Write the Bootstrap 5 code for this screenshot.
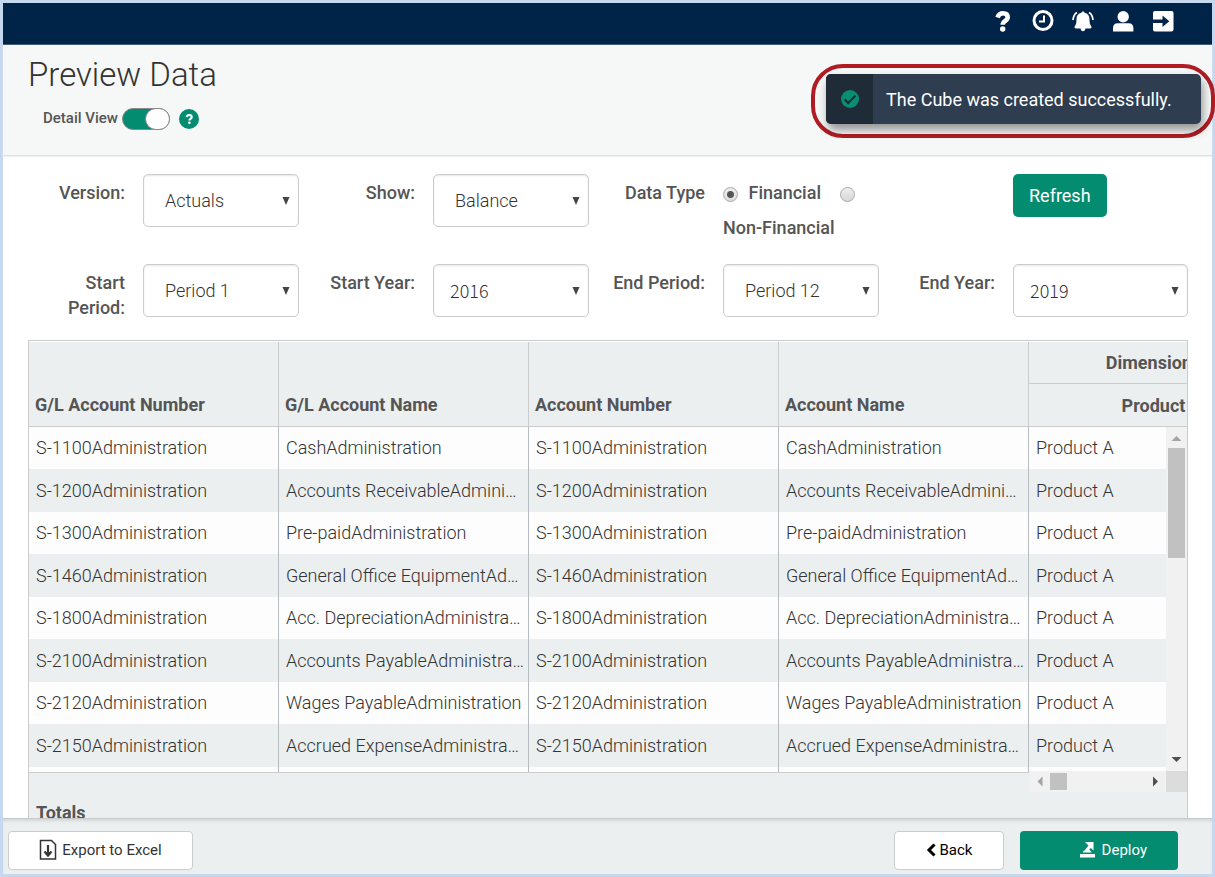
<!DOCTYPE html>
<html lang="en">
<head>
<meta charset="utf-8">
<meta name="viewport" content="width=device-width, initial-scale=1">
<title>Preview Data</title>
<link href="https://cdn.jsdelivr.net/npm/bootstrap@5.3.0/dist/css/bootstrap.min.css" rel="stylesheet">
<style>
  :root { --green: #048c71; --navy: #002448; --ink: #555; --ink-light: #333; --mist: #ebeff0; --rule: #ccc; }
  body { font-family: Roboto, "Liberation Sans", sans-serif; font-size: 18px; line-height: 25px; color: var(--ink); }
  .app-frame { border: 3px solid #c6d8f0; height: 100vh; background: #fff; }
  .topbar { background: var(--navy); height: 42px; padding: 0 35px 5px; gap: 12px; border-bottom: 1px solid #3f5c78; }
  .topbar a { width: 28px; height: 28px; color: #fff; }
  .page-head { background: #f5f8f7; border-bottom: 1px solid #e0e3e3; height: 111px; padding: 8px 25px; box-shadow: 0 1px 1px #f1f1f1; }
  .page-head h1 { font-size: 33px; line-height: 44px; font-weight: 300; color: var(--ink-light); margin: 0; }
  .detail { font-size: 15px; font-weight: 500; padding-left: 15px; margin-top: 9px; gap: 4px; }
  .form-switch .form-check-input.view-toggle { width: 48px; height: 22px; margin: 0; border: 1px solid #888; border-radius: 11px; background: var(--green); position: relative; }
  .view-toggle::before { content: ""; position: absolute; right: -1px; top: -1px; width: 25px; height: 22px; border: 1px solid #888; border-radius: 11px; background: #fff; }
  .help-dot { width: 20px; height: 20px; margin-left: 5px; background: var(--green); }

  .callout-ring { position: absolute; top: 61px; right: -3px; z-index: 5; border: 4px solid #b01c24; border-radius: 32px; padding: 6px 10px 10px 11px; }
  .toast.notice { width: 375px; max-width: 100%; height: 50px; border: 0; border-radius: 5px; background: #2e3d50; color: #fff; overflow: hidden; box-shadow: 2px 6px 10px rgba(0,0,0,.4); }
  .notice-mark { width: 47px; background: #1f2b37; }
  .notice-text { padding-left: 13px; font-size: 18px; font-weight: 400; }

  .work { padding: 18px 24px 0 25px; min-height: 0; overflow: hidden; }
  .filters { row-gap: 37px; }
  .field-name { flex: 0 0 115px; padding: 6px 18px 0 0; text-align: right; font-weight: 500; }
  .field-slot { padding-right: 19px; flex: 1 1 0; min-width: 0; }
  .field-slot.last-slot { padding-right: 0; }
  .form-select.pick { height: 53px; padding: 0 24px 0 21px; font-size: 18px; font-weight: 300; line-height: 25px; color: var(--ink-light); border: 1px solid var(--rule); border-radius: 5px; box-shadow: inset 0 1px 2px rgba(0,0,0,.1);
    background: #fff url("data:image/svg+xml,%3Csvg xmlns='http://www.w3.org/2000/svg' viewBox='0 0 8 8'%3E%3Cpath fill='%23444' d='M.5 0h7L4 8z'/%3E%3C/svg%3E") no-repeat right 8px center / 8px 8px; }
  .form-select.pick.year { font-family: "Noto Sans CJK SC", "Noto Sans", sans-serif; padding-left: 16px; }
  .radios { height: 53px; line-height: 35px; font-weight: 500; padding-top: 1px; }
  .dot { appearance: none; width: 15px; height: 15px; margin: 0 6px 0 0; vertical-align: -3px; border: 1px solid #a9a9a9; border-radius: 50%; background: linear-gradient(#eee, #d6d6d6); }
  .dot:checked { background: radial-gradient(circle, #555 0 3px, transparent 4px), linear-gradient(#eee, #ddd); }
  .dot.next { margin-left: 14px; }
  .btn-go { background: var(--green); color: #fff; border-radius: 5px; font-size: 18px; line-height: 25px; padding: 9px 16px; }
  .btn-go:hover { background: #037a62; color: #fff; }

  .grid-frame { position: relative; margin-top: 20px; border: 1px solid var(--rule); background: var(--mist); }
  .grid-view { height: 431px; padding-top: 1px; overflow: hidden; background: #fff; }
  .grid-table { table-layout: fixed; width: 1250px; border-collapse: separate; border-spacing: 0; margin: 0; }
  .grid-table th { background: var(--mist); font-weight: 700; padding: 0 6px; border-right: 1px solid var(--rule); border-bottom: 1px solid var(--rule); vertical-align: bottom; }
  .grid-table th[rowspan] { padding-bottom: 9px; }
  .grid-table thead tr:first-child th { height: 42px; }
  .grid-table thead tr:last-child th { height: 43px; }
  .grid-table .center-head { text-align: center; vertical-align: middle; }
  .grid-table td { font-weight: 300; color: var(--ink-light); height: 42px; line-height: 42px; padding: 0 4px 0 7px; background: #fdfdfd; border-right: 1px solid #b6bcc0; vertical-align: top; }
  .grid-table tbody tr:nth-child(even) td { height: 43px; padding-top: 1px; background: var(--mist); }
  .frozen-edge { width: 1000px; max-width: 100%; height: 1px; background: var(--rule); }
  .totals { padding: 27px 7px; height: 90px; font-weight: 700; }

  .bar-v { position: absolute; top: 86px; right: 0; width: 21px; height: 344px; background: #f1f1f1; color: #a3a3a3; }
  .bar-h { position: absolute; top: 430px; left: 1000px; right: 0; height: 21px; background: #f1f1f1; }
  .thumb-v { width: 17px; height: 110px; background: #c1c1c1; }
  .thumb-h { width: 17px; height: 17px; background: #c1c1c1; }
  .bar-corner { width: 21px; background: #dcdcdc; }

  .actions { position: relative; height: 56px; background: var(--mist); border-top: 1px solid #c6caca; box-shadow: inset 0 3px 3px -1px rgba(0,0,0,.1); padding: 7px 34px 0 5px; gap: 16px; }
  .actions .btn { height: 39px; font-size: 15px; line-height: 24px; padding: 0; border-radius: 4px; }
  .btn-plain, .btn-plain:hover { background: #fff; border: 1px solid var(--rule); color: #333; }
  .btn-export { width: 185px; }
  .btn-back, .btn-back:hover { width: 110px; color: #000; }
  .actions .btn-deploy { width: 158px; padding-right: 31px; }
</style>
</head>
<body>
<div class="app-frame d-flex flex-column position-relative">
  <nav class="topbar d-flex flex-shrink-0 align-items-center justify-content-end" aria-label="Account">
    <a href="#help" aria-label="Help"><svg width="28" height="28" viewBox="0 0 28 28" fill="none" stroke="#fff" stroke-width="4.600"><path d="M8.500 10.500C9.500 7.500 11.500 6.300 14 6.300c3 0 4.700 1.500 4.700 3.900 0 3.900-5 3.300-5 7.600"/><circle cx="13.700" cy="22" r="2.700" fill="#fff" stroke="none"/></svg></a>
    <a href="#history" aria-label="History"><svg width="28" height="28" viewBox="0 0 28 28" fill="none" stroke="#fff" stroke-width="3"><circle cx="14" cy="13.500" r="9"/><path d="M15 8.500v6h-5" stroke-width="2"/></svg></a>
    <a href="#alerts" aria-label="Alerts"><svg width="28" height="28" viewBox="0 0 28 28" fill="#fff"><path d="M14 4.500c.9 0 1.500.6 1.500 1.300 3.500.7 5 3 5 6.200 0 4 .4 5.500 1.600 6.900.9 1.100.2 2.600-1.100 2.600h-4.600c0 1.600-1 2.800-2.400 2.800s-2.400-1.200-2.400-2.800H7c-1.300 0-2-1.500-1.100-2.600 1.200-1.400 1.600-2.900 1.600-6.900 0-3.200 1.500-5.500 5-6.200 0-.7.600-1.300 1.500-1.300z"/><path d="M8 5.500Q4.500 7.500 4 13M20 5.500q3.500 2 4 7.500" fill="none" stroke="#fff" stroke-width="1.800"/></svg></a>
    <a href="#profile" aria-label="Profile"><svg width="28" height="28" viewBox="0 0 28 28" fill="#fff"><circle cx="14.200" cy="9.700" r="5.700"/><path d="M4 24v-3c0-2.800 1.800-4.800 4.600-4.800h11.200c2.800 0 4.600 2 4.600 4.800v3c0 .4-.2.600-.6.600H4.600c-.4 0-.6-.2-.6-.600z"/></svg></a>
    <a href="#logout" aria-label="Log out"><svg width="28" height="28" viewBox="0 0 28 28"><rect x="4" y="4" width="20.500" height="20.500" rx="2" fill="#fff"/><path d="M3 12.500h10.500V8.500l6.800 5.800-6.800 5.800V16H3z" fill="#002448"/></svg></a>
  </nav>

  <header class="page-head flex-shrink-0">
    <h1>Preview Data</h1>
    <div class="detail form-switch d-flex align-items-center">
      <label for="detailView">Detail View</label>
      <input class="form-check-input view-toggle" type="checkbox" role="switch" id="detailView" checked>
      <a class="help-dot rounded-circle d-flex" href="#detail-help" aria-label="About detail view"><svg width="20" height="20" viewBox="0 0 20 20" fill="none" stroke="#fff" stroke-width="2.200"><path d="M7.700 7.900C8 6.600 8.900 6 10.200 6c1.500 0 2.500.8 2.500 2 0 1.900-2.300 1.700-2.300 3.500"/><circle cx="10.400" cy="13.800" r="1.300" fill="#fff" stroke="none"/></svg></a>
    </div>
  </header>

  <div class="callout-ring">
    <div class="toast notice show d-flex" role="status">
      <div class="notice-mark d-flex align-items-center justify-content-center"><svg width="18" height="18" viewBox="0 0 18 18"><circle cx="9" cy="9" r="9" fill="#078e73"/><path d="M3.500 9.300l3.700 3.700 7.300-7.500" fill="none" stroke="#1f2b37" stroke-width="2"/></svg></div>
      <div class="notice-text d-flex align-items-center">The Cube was created successfully.</div>
    </div>
  </div>

  <main class="work flex-grow-1">
    <form class="filters row g-0">
      <div class="col-3 d-flex">
        <label class="field-name" for="version">Version:</label>
        <div class="field-slot"><select class="form-select pick" id="version"><option>Actuals</option></select></div>
      </div>
      <div class="col-3 d-flex">
        <label class="field-name" for="show">Show:</label>
        <div class="field-slot"><select class="form-select pick" id="show"><option>Balance</option></select></div>
      </div>
      <div class="col-3 d-flex" role="radiogroup" aria-labelledby="dataType">
        <span class="field-name" id="dataType">Data Type</span>
        <div class="field-slot radios"><input class="dot" type="radio" name="kind" id="fin" checked> <label for="fin">Financial</label> <input class="dot next" type="radio" name="kind" id="nonfin"> <label for="nonfin">Non-Financial</label></div>
      </div>
      <div class="col-3 d-flex">
        <span class="field-name"></span>
        <div class="field-slot last-slot"><button class="btn btn-go border-0" type="button">Refresh</button></div>
      </div>
      <div class="col-3 d-flex">
        <label class="field-name" for="startPeriod">Start Period:</label>
        <div class="field-slot"><select class="form-select pick" id="startPeriod"><option>Period 1</option></select></div>
      </div>
      <div class="col-3 d-flex">
        <label class="field-name" for="startYear">Start Year:</label>
        <div class="field-slot"><select class="form-select pick year" id="startYear"><option>2016</option></select></div>
      </div>
      <div class="col-3 d-flex">
        <label class="field-name" for="endPeriod">End Period:</label>
        <div class="field-slot"><select class="form-select pick" id="endPeriod"><option>Period 12</option></select></div>
      </div>
      <div class="col-3 d-flex">
        <label class="field-name" for="endYear">End Year:</label>
        <div class="field-slot last-slot"><select class="form-select pick year" id="endYear"><option>2019</option></select></div>
      </div>
    </form>

    <section class="grid-frame" aria-label="Cube data">
      <div class="grid-view">
        <table class="grid-table">
          <thead>
            <tr><th rowspan="2">G/L Account Number</th><th rowspan="2">G/L Account Name</th><th rowspan="2">Account Number</th><th rowspan="2">Account Name</th><th class="center-head">Dimensions</th></tr>
            <tr><th class="center-head">Product</th></tr>
          </thead>
          <tbody>
            <tr><td>S-1100Administration</td><td class="text-truncate">CashAdministration</td><td>S-1100Administration</td><td class="text-truncate">CashAdministration</td><td>Product A</td></tr>
            <tr><td>S-1200Administration</td><td class="text-truncate">Accounts ReceivableAdministration</td><td>S-1200Administration</td><td class="text-truncate">Accounts ReceivableAdministration</td><td>Product A</td></tr>
            <tr><td>S-1300Administration</td><td class="text-truncate">Pre-paidAdministration</td><td>S-1300Administration</td><td class="text-truncate">Pre-paidAdministration</td><td>Product A</td></tr>
            <tr><td>S-1460Administration</td><td class="text-truncate">General Office EquipmentAdministration</td><td>S-1460Administration</td><td class="text-truncate">General Office EquipmentAdministration</td><td>Product A</td></tr>
            <tr><td>S-1800Administration</td><td class="text-truncate">Acc. DepreciationAdministration</td><td>S-1800Administration</td><td class="text-truncate">Acc. DepreciationAdministration</td><td>Product A</td></tr>
            <tr><td>S-2100Administration</td><td class="text-truncate">Accounts PayableAdministration</td><td>S-2100Administration</td><td class="text-truncate">Accounts PayableAdministration</td><td>Product A</td></tr>
            <tr><td>S-2120Administration</td><td class="text-truncate">Wages PayableAdministration</td><td>S-2120Administration</td><td class="text-truncate">Wages PayableAdministration</td><td>Product A</td></tr>
            <tr><td>S-2150Administration</td><td class="text-truncate">Accrued ExpenseAdministration</td><td>S-2150Administration</td><td class="text-truncate">Accrued ExpenseAdministration</td><td>Product A</td></tr>
            <tr><td></td><td></td><td></td><td></td><td></td></tr>
          </tbody>
        </table>
      </div>
      <div class="frozen-edge"></div>
      <div class="totals">Totals</div>
      <div class="bar-v d-flex flex-column align-items-center justify-content-between" aria-hidden="true">
        <div class="d-flex flex-column align-items-center"><svg width="21" height="21" viewBox="0 0 21 21"><path d="M5.500 14h10l-5-5z" fill="#a3a3a3"/></svg><div class="thumb-v"></div></div>
        <svg width="21" height="21" viewBox="0 0 21 21"><path d="M5.500 7h10l-5 5z" fill="#505050"/></svg>
      </div>
      <div class="bar-h d-flex" aria-hidden="true">
        <div class="d-flex flex-grow-1 align-items-center"><svg width="21" height="21" viewBox="0 0 21 21"><path d="M13.500 5.500v10l-5-5z" fill="#a3a3a3"/></svg><div class="thumb-h"></div><svg class="ms-auto" width="21" height="21" viewBox="0 0 21 21"><path d="M8 5.500v10l5-5z" fill="#505050"/></svg></div>
        <div class="bar-corner"></div>
      </div>
    </section>
  </main>

  <footer class="actions d-flex flex-shrink-0 align-items-center">
    <button type="button" class="btn btn-plain btn-export me-auto d-flex align-items-center justify-content-center gap-1"><svg width="19" height="22" viewBox="0 0 19 22" fill="none" stroke="#333" stroke-width="1.500"><path d="M1.500 1.500h11l4 4v14.500h-15z"/><path d="M9 6v10M5.500 12.500L9 16.500l3.500-4" stroke-width="2.200"/></svg>Export to Excel</button>
    <button type="button" class="btn btn-plain btn-back d-flex align-items-center justify-content-center gap-1"><svg width="10" height="14" viewBox="0 0 10 14"><path d="M8.500 1.500L3 7l5.500 5.500" fill="none" stroke="#000" stroke-width="3"/></svg>Back</button>
    <button type="button" class="btn btn-go btn-deploy border-0 d-flex align-items-center justify-content-end gap-1"><svg width="18" height="16" viewBox="0 0 18 16" fill="#fff"><path d="M0 12h15v3.500H0zM5 0h8.500v8.500L10.800 6l-1.500 1.500 2.500 3H3v-1l2-1.500 3.500-4.500z"/></svg>Deploy</button>
  </footer>
</div>
<script src="https://cdn.jsdelivr.net/npm/bootstrap@5.3.0/dist/js/bootstrap.bundle.min.js"></script>
</body>
</html>
